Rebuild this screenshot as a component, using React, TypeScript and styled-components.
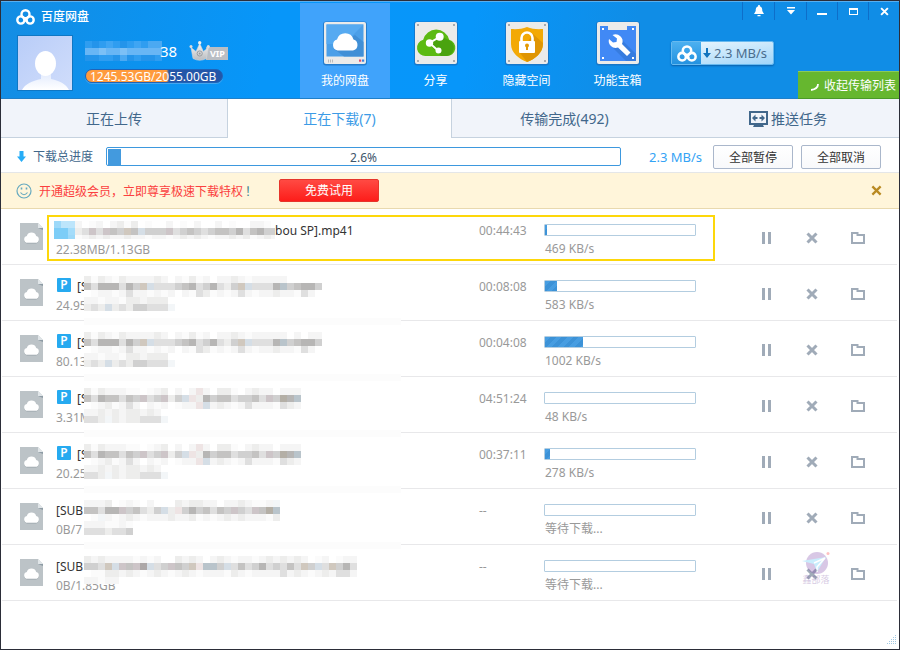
import React from 'react';
import styled, { createGlobalStyle, css } from 'styled-components';

const GlobalStyle = createGlobalStyle`
  * { box-sizing: border-box; }
  body {
    margin: 0;
    background: #fff;
    font-family: "Noto Sans", "Noto Sans CJK SC", sans-serif;
    font-size: 12px;
    line-height: 18px;
    color: #333;
  }
  button {
    font: inherit;
    color: inherit;
    background: none;
    border: 0;
    padding: 0;
    margin: 0;
    cursor: pointer;
  }
  svg { display: block; flex: none; }
`;

const Window = styled.div`
  display: flex;
  flex-direction: column;
  min-height: 100vh;
  border: 1px solid #2b2d38;
  background: #fff;
`;

/* ---------- header ---------- */

const Header = styled.header`
  display: flex;
  height: 98px;
  border-top: 1px solid #58aff0;
  border-bottom: 1px solid #2080c9;
  background: linear-gradient(100deg, #148de3 0%, #0c92ef 16%, #0796f9 30%, #0796fa 52%, #108de6 70%, #108de6 100%);
  color: #fff;
`;

const Account = styled.div`
  display: flex;
  flex-direction: column;
  width: 299px;
  padding: 6px 0 0 15px;
`;

const Brand = styled.h1`
  display: flex;
  align-items: center;
  gap: 6px;
  height: 18px;
  margin: 0;
  font-size: 12px;
  font-weight: 500;
`;

const Profile = styled.div`
  display: flex;
  gap: 12px;
  margin-top: 9px;
`;

const Avatar = styled.span`
  display: block;
  margin-left: 1px;
  border: 1px solid #0f77c4;
`;

const ProfileText = styled.div`
  display: flex;
  flex-direction: column;
  gap: 7px;
  padding-top: 5px;
`;

const NameLine = styled.div`
  display: flex;
  align-items: center;
  height: 22px;
  font-size: 15px;
  line-height: 20px;
`;

const NameTail = styled.span`
  margin-left: -2px;
`;

const VipMark = styled.span`
  margin-left: 12px;
`;

const Quota = styled.div`
  width: 138px;
  height: 14px;
  padding: 0 4px;
  border-radius: 7px;
  border: 1px solid #1f63b8;
  box-shadow: 0 1px 0 #45a6ee;
  background: linear-gradient(90deg, #ff9b3d 0 59%, #2356a8 61%);
  font-size: 12px;
  line-height: 14px;
  white-space: nowrap;
`;

const Nav = styled.nav`
  display: flex;
  padding-top: 1px;
`;

const NavItem = styled.a<{ $active?: boolean }>`
  display: flex;
  flex-direction: column;
  align-items: center;
  gap: 6px;
  width: 91px;
  padding-top: 17px;
  color: #fff;
  text-decoration: none;
  ${(p) => p.$active && css`width: 90px; background: #40a3fb;`}
`;

const HeaderTools = styled.div`
  display: flex;
  flex: 1;
  flex-direction: column;
  align-items: flex-start;
`;

const WindowControls = styled.div`
  display: flex;
  align-self: flex-end;
  height: 18px;
`;

const ControlButton = styled.button<{ $wide?: boolean }>`
  display: flex;
  align-items: center;
  justify-content: center;
  width: ${(p) => (p.$wide ? 32 : 31)}px;
  border-left: 1px solid #0e6ec9;
`;

const SpeedWidget = styled.div`
  display: flex;
  height: 24px;
  margin: 21px 0 0 8px;
  border: 1px solid #67b9ef;
  border-radius: 2px;
  box-shadow: 0 1px 2px #0a5faa;
  overflow: hidden;
`;

const SpeedLogo = styled.span`
  display: flex;
  align-items: center;
  justify-content: center;
  width: 29px;
  background: linear-gradient(#4cb0f0, #2492e0);
`;

const SpeedValue = styled.span`
  display: flex;
  align-items: center;
  gap: 3px;
  width: 72px;
  padding-left: 2px;
  background: linear-gradient(170deg, #e6f4fd, #9fd5fa);
  color: #4a6d8d;
  font-size: 13px;
`;

const CollapseButton = styled.button`
  display: flex;
  align-self: flex-end;
  align-items: center;
  justify-content: flex-end;
  gap: 5px;
  width: 101px;
  height: 28px;
  margin-top: auto;
  margin-bottom: -1px;
  padding: 2px 3px 0 0;
  border-top: 1px solid #8bc95a;
  border-bottom: 1px solid #4a9a28;
  background: #66b72f;
  color: #fff;
  white-space: nowrap;
`;

/* ---------- tabs ---------- */

const Tabs = styled.div`
  display: grid;
  grid-template-columns: 227fr 223fr 226fr 222fr;
  height: 39px;
`;

const Tab = styled.button<{ $active?: boolean; $edge?: 'left' | 'right' }>`
  display: flex;
  align-items: center;
  justify-content: center;
  gap: 3px;
  padding-top: 2px;
  background: #f1f4fa;
  border-bottom: 1px solid #c6d2df;
  color: #41678b;
  font-size: 14px;
  ${(p) => p.$edge === 'left' && css`border-left: 1px solid #c6d2df;`}
  ${(p) => p.$edge === 'right' && css`border-right: 1px solid #c6d2df;`}
  ${(p) => p.$active && css`background: #fff; border-color: #fff; color: #3c9be6;`}
`;

/* ---------- total progress ---------- */

const TotalBar = styled.section`
  display: flex;
  align-items: center;
  height: 35px;
  padding: 3px 18px 0 15px;
  border-bottom: 1px solid #e4e6e8;
`;

const TotalLabel = styled.span`
  margin: 0 13px 0 6px;
  color: #41678b;
`;

const TotalTrack = styled.div`
  display: grid;
  flex: 1;
  height: 19px;
  padding: 1px;
  border: 1px solid #3d98de;
  border-radius: 2px;
`;

const TotalFill = styled.div`
  grid-area: 1 / 1;
  background: #439ade;
`;

const TotalText = styled.span`
  grid-area: 1 / 1;
  justify-self: center;
  line-height: 17px;
  color: #41566b;
`;

const TotalSpeed = styled.span`
  width: 92px;
  padding-left: 28px;
  color: #34a3f5;
  font-size: 13px;
  white-space: nowrap;
`;

const PlainButton = styled.button`
  width: 80px;
  height: 24px;
  padding-top: 2px;
  border: 1px solid #aab7cb;
  border-radius: 2px;
  background: linear-gradient(#fff, #f8f9fb);
  color: #333;
  & + & { margin-left: 8px; }
`;

/* ---------- banner ---------- */

const Banner = styled.section`
  display: flex;
  align-items: center;
  height: 36px;
  padding: 0 17px 0 15px;
  border-bottom: 1px solid #e9d9ae;
  background: #fff5da;
  color: #fb4040;
`;

const BannerText = styled.span`
  display: flex;
  width: 233px;
  margin: 2px 0 0 7px;
  white-space: nowrap;
`;

const Exclaim = styled.span`
  margin-left: 2px;
  color: #3e7f8c;
`;

const TrialButton = styled.button`
  width: 100px;
  height: 23px;
  margin-left: 7px;
  padding-top: 1px;
  border: 1px solid #e6352b;
  border-radius: 2px;
  background: linear-gradient(#ff4a43, #fd1d1a);
  color: #fff;
`;

const BannerClose = styled.button`
  margin-left: auto;
`;

/* ---------- list ---------- */

const List = styled.ul`
  flex: 1;
  margin: 0;
  padding: 0 2px 0 1px;
  list-style: none;
`;

const Row = styled.li`
  position: relative;
  display: grid;
  grid-template-columns: 36px minmax(0, 1fr) 65px 152px 47px 138px 16px;
  height: 56px;
  padding-left: 18px;
  border-bottom: 1px solid #e8e8ea;
`;

const FileIconCell = styled.span`
  padding-top: 14px;
`;

const Lines = styled.div`
  position: relative;
  display: flex;
  flex-direction: column;
  gap: 1px;
  padding-top: 13px;
  color: #999;
  white-space: nowrap;
`;

const FileName = styled.div`
  display: flex;
  align-items: center;
  height: 18px;
  color: #333;
`;

const PBadge = styled.span`
  width: 14px;
  height: 14px;
  margin: 0 6px 4px 1px;
  border-radius: 1px;
  background: #26aaf0;
  color: #fff;
  font-size: 12px;
  font-weight: 600;
  line-height: 13px;
  text-align: center;
`;

const FirstMask = styled.span`
  width: 221px;
  margin-left: -2px;
  margin-top: -3px;
  overflow: hidden;
`;

const MaskOver = styled.span`
  position: absolute;
  z-index: 1;
  left: 28px;
  top: 11px;
`;

const TimeCell = styled.span`
  padding-top: 13px;
  color: #999;
`;

const ProgressCell = styled.div`
  display: flex;
  flex-direction: column;
  gap: 4px;
  padding-top: 15px;
  color: #999;
`;

const Track = styled.div`
  height: 12px;
  border: 1px solid #b3cde0;
  border-radius: 1px;
`;

const Fill = styled.div`
  height: 10px;
  background: repeating-linear-gradient(135deg, #479de1 0 4px, #3c92d7 4px 8px);
`;

const SpeedText = styled.span`
  padding-left: 1px;
`;

const Actions = styled.div`
  display: grid;
  grid-column: 6;
  grid-template-columns: repeat(3, 46px);
  height: 58px;
`;

const ActionButton = styled.button`
  position: relative;
  display: flex;
  align-items: center;
  justify-content: center;
`;

const Highlight = styled.span`
  position: absolute;
  z-index: 2;
  top: 6px;
  bottom: 3px;
  left: 45px;
  right: 182px;
  border: 2px solid #fdd70a;
  pointer-events: none;
`;

const Watermark = styled.span`
  position: absolute;
  top: 6px;
  left: 12px;
  display: flex;
  flex-direction: column;
  align-items: center;
  color: #7b54a6;
  font-size: 9px;
  line-height: 9px;
  white-space: nowrap;
  opacity: 0.3;
`;

const Footer = styled.footer`
  display: flex;
  justify-content: flex-end;
  padding: 0 3px 5px 0;
`;

/* ---------- pixel mask ---------- */

const TONES: Record<string, string> = {
  a: '#fbfbfb', b: '#f5f5f5', c: '#ededec', d: '#dfdfdf', e: '#d0d0d0', f: '#c4c3c2', g: '#b7b6b5',
  h: '#d5dee6', i: '#d0c8be', j: '#eee4e4', k: '#f3f6f8', l: '#b9c4cb', m: '#cdc5c8', n: '#b4afa6', o: '#ada8a8',
  A: '#a4dcfa', B: '#7dcdf7', C: '#9dd9f9', D: '#bde5fb',
  P: '#2f9df0', Q: '#3fa5f3', R: '#68b6f5', S: '#7cc0f6', T: '#2494ea', U: '#4ba9f2',
};

function Mask({ rows, base, trim = 0, band = false }: { rows: string[]; base?: string; trim?: number; band?: boolean }) {
  const cols = Math.max(...rows.map((r) => r.length));
  const width = band ? 317 : cols * 7;
  const height = band ? 49 : rows.length * 7 - trim;
  return (
    <svg width={width} height={height} shapeRendering="crispEdges" aria-hidden="true">
      {rows.map((r, y) => (
        <g key={y}>
          {base && <rect x={0} y={y * 7} width={r.length * 7} height={7} fill={base} />}
          {r.split('').map((ch, x) =>
            TONES[ch] ? <rect key={x} x={x * 7} y={y * 7} width={7} height={7} fill={TONES[ch]} /> : null,
          )}
        </g>
      ))}
      {band && <rect x={0} y={42} width={317} height={7} fill="#fcfcfc" />}
    </svg>
  );
}

const MASK_A = [
  'cacbacbbbbcb.bacab.bbcbabbbbb.....',
  'fdgggdgeihdddefgdegdceihdddglefgge',
  '.abbabdbbabab.badcababdbabbcbbadb.',
  'bbabbaccbccc',
  'cdchcdceedddk',
];
const MASK_A2 = [MASK_A[0].slice(0, 29) + '.b.bb', ...MASK_A.slice(1)];
const MASK_B = [
  'cacbbbaa.abc.b.bjb.cca.bcbb.bbb',
  'fdgffdfemdemcehjcgeffdeefdmengl',
  '.abcabdb.bab.abbjhbcbabdbbbadcb',
  'bbcbcbccbcb',
  'ddckcbccdddk',
];
const MASK_C = [
  'bbbc.aba.b...cbccbb.bbcbaabk',
  'ffdggmefdcehcjegefdfemedmfnl',
  '.akbabcbabbbcbbcababcbcbbbac',
  'bbbaaba',
  'dddcdde',
];
const MASK_D = [
  'cbcbbbbabab..cbcb.bcbabbabcbcbcb.ab.abb',
  'eedihmfmohdemfeijllehdfdegdedfdiehdiegd',
  '.aaccbcbabcbabcbabbbacbabbbbdbcbabcbddb',
  'bbabb',
];
const MASK_FIRST = [
  'CDDb.ab.bcac.a..b.a.b..b.a..bba.',
  'BBAcdmdmfeifheeemdefedeffegdfgee',
  'BBCabcbcbbcbbabbabcbcbabbcbcabcb',
];

/* ---------- icons ---------- */

function CloudLogo({ width = 19 }: { width?: number }) {
  return (
    <svg width={width} height={Math.round(width * 0.84)} viewBox="0 0 19 16" fill="none" stroke="#fff" strokeWidth="2.4">
      <circle cx="9.5" cy="5.3" r="4" />
      <circle cx="4.9" cy="11" r="3.6" />
      <circle cx="14.1" cy="11" r="3.6" />
      <path d="M7.6 9.2 11.2 12.7" />
    </svg>
  );
}

function AvatarArt() {
  return (
    <svg width="54" height="54" viewBox="0 0 54 54">
      <defs>
        <linearGradient id="av" x1="0" y1="0" x2="1" y2="1">
          <stop offset="0" stopColor="#b9cdf8" />
          <stop offset="1" stopColor="#d0ddfb" />
        </linearGradient>
        <linearGradient id="sh" x1="0" y1="0" x2="0" y2="1">
          <stop offset="0" stopColor="#e4ecfd" />
          <stop offset="1" stopColor="#fff" />
        </linearGradient>
      </defs>
      <rect width="54" height="54" fill="url(#av)" />
      <path d="M4 54c3-6 10-9 19-11v-5h10v5c9 2 15 5 18 11z" fill="url(#sh)" />
      <ellipse cx="27.5" cy="27.5" rx="10.5" ry="12.5" fill="#fff" />
    </svg>
  );
}

function VipBadge() {
  return (
    <svg width="40" height="22" viewBox="0 0 40 22" role="img" aria-label="VIP">
      <defs>
        <linearGradient id="cr" x1="0" y1="0" x2="0" y2="1">
          <stop offset="0" stopColor="#f4f4f4" />
          <stop offset="1" stopColor="#b9bcc0" />
        </linearGradient>
      </defs>
      <rect x="17" y="7" width="22" height="13" fill="#b9bec4" />
      <path d="M4 18.5 2 7.5l5 4 3.700-8 3.700 8 5-4-2 11q-6.700 3.500-13.400 0z" fill="url(#cr)" stroke="#d5d7da" strokeWidth=".6" />
      <circle cx="10.700" cy="2.800" r="1.700" fill="#eee" />
      <circle cx="2" cy="6.500" r="1.500" fill="#ddd" />
      <circle cx="19.300" cy="6.500" r="1.500" fill="#ddd" />
      <circle cx="10.700" cy="13.500" r="2.600" fill="none" stroke="#9a9da2" />
      <circle cx="10.700" cy="13.500" r=".9" fill="#999" />
      <text x="21" y="17" fontSize="9" fontWeight="700" fill="#fff" fontFamily="Noto Sans, sans-serif">VIP</text>
    </svg>
  );
}

function Plate({ children }: { children: React.ReactNode }) {
  return (
    <svg width="46" height="46" viewBox="0 0 46 46">
      <rect x="1" y="1.500" width="44" height="44" rx="3" fill="#1a6fbd" opacity=".75" />
      <rect x="2" y="2" width="42" height="42" rx="2" fill="#ebebea" />
      {children}
    </svg>
  );
}

function Screws() {
  return <path d="M4 4h2v2H4zM40 4h2v2h-2zM4 40h2v2H4zM40 40h2v2h-2z" fill="#a9abae" />;
}

function DiskIcon() {
  return (
    <Plate>
      <rect x="4.500" y="4.500" width="37" height="32" fill="#4b9fe8" />
      <path d="M33 15l8.500 7v14.500H22L12 29z" fill="#408fd6" />
      <path d="M4.500 4.500h37L22 24H4.500z" fill="#56aaf1" />
      <path d="M15.500 30.500a5.700 5.700 0 0 1-.5-11 8.600 8.600 0 0 1 16.500 0 5.700 5.700 0 0 1-.5 11z" fill="#fff" />
      <path d="M6.500 39.500v3M8.500 39.500v3M10.500 39.500v3" stroke="#bbb" />
      <rect x="37" y="39.500" width="2.200" height="2.200" fill="#e54b6b" />
      <rect x="40" y="39.500" width="2.200" height="2.200" fill="#3b85e0" />
    </Plate>
  );
}

function ShareIcon() {
  return (
    <Plate>
      <Screws />
      <path d="M13 36a8.300 8.300 0 0 1-2.800-16.300 13.400 13.400 0 0 1 26 0A8.300 8.300 0 0 1 33.500 36z" fill="#5cba12" />
      <path d="M27 15.500l9.500 5A8.300 8.300 0 0 1 33.500 36H28l-11-11z" fill="#4aa30f" />
      <path d="M26.500 17 16.500 23l8.500 7.500" fill="none" stroke="#fff" strokeWidth="2" />
      <circle cx="26.700" cy="16.700" r="4" fill="#fff" />
      <circle cx="16.500" cy="23" r="3.700" fill="#fff" />
      <circle cx="25.500" cy="30.500" r="3" fill="#fff" />
    </Plate>
  );
}

function SafeIcon() {
  return (
    <Plate>
      <Screws />
      <path d="M23 7c-5 2-10 2.400-16 2v15c0 9 8 15 16 18 8-3 16-9 16-18V9c-6 .4-11 0-16-2z" fill="#f3a905" />
      <path d="M29 14l10 9c0 10-8 16-16 19l-7-9z" fill="#df9503" />
      <path d="M17.500 22v-4a5.500 5.500 0 0 1 11 0v4" fill="none" stroke="#fff" strokeWidth="2.600" />
      <rect x="15" y="21" width="16" height="12" rx="1" fill="#fff" />
      <circle cx="23" cy="25.500" r="2" fill="#e39a05" />
      <path d="M22 26h2v4h-2z" fill="#e39a05" />
    </Plate>
  );
}

function ToolboxIcon() {
  return (
    <Plate>
      <path d="M5 6h8v4h19V6h9v35H5z" fill="#4189f5" />
      <path d="M27 20l14 14v7H31L18 28z" fill="#377cdf" />
      <path d="M7 8h2v2H7zM37 8h2v2h-2zM7 37h2v2H7zM37 37h2v2h-2z" fill="#fff" />
      <path d="M17.500 15a7 7 0 0 1 9.500 9l8.500 8.500-3.500 3.500-9-8.500a7 7 0 0 1-9-8.500l4 3.500 3.500-.5.500-3.500z" fill="#fff" />
    </Plate>
  );
}

function CrossIcon({ size, color, weight }: { size: number; color: string; weight: number }) {
  return (
    <svg width={size} height={size} viewBox="0 0 12 12" stroke={color} strokeWidth={weight}>
      <path d="M1.500 1.500l9 9M10.500 1.500l-9 9" />
    </svg>
  );
}

function FileIcon() {
  return (
    <svg width="23" height="27" viewBox="0 0 23 27">
      <path d="M0 0h18l5 5v22H0z" fill="#bcc3c7" />
      <path d="M18 0v5h5z" fill="#e0e5e8" />
      <path d="M18 5h5v2z" fill="#8d9ba4" />
      <path d="M7.500 20.500a3.500 3.500 0 0 1-.7-6.900 5 5 0 0 1 9.400 0 3.500 3.500 0 0 1-.7 6.900z" fill="#98a3a9" />
      <path d="M7.500 19.800a3.500 3.500 0 0 1-.7-6.900 5 5 0 0 1 9.400 0 3.500 3.500 0 0 1-.7 6.900z" fill="#fff" />
    </svg>
  );
}

function PauseIcon() {
  return (
    <svg width="9" height="12" viewBox="0 0 9 12" fill="#a0abb8">
      <path d="M0 0h3v12H0zM6 0h3v12H6z" />
    </svg>
  );
}

function FolderIcon() {
  return (
    <svg width="14" height="12" viewBox="0 0 14 12" fill="none" stroke="#a0abb8" strokeWidth="2">
      <path d="M1 1h5.500v2H13v8H1z" />
    </svg>
  );
}

function SmileIcon() {
  return (
    <svg width="16" height="16" viewBox="0 0 16 16" fill="none" stroke="#66a9bf" strokeWidth="1.200">
      <circle cx="8" cy="8" r="7" />
      <path d="M4.500 9.500q3.500 4.500 7 0" />
      <path d="M5.500 4.500v2M10.500 4.500v2" strokeWidth="1.600" />
    </svg>
  );
}

/* ---------- data ---------- */

interface Task {
  name: string;
  size: string;
  time: string;
  speed: string;
  percent: number;
  badge?: boolean;
  mask?: string[];
}

const TASKS: Task[] = [
  { name: 'bou SP].mp41', size: '22.38MB/1.13GB', time: '00:44:43', speed: '469 KB/s', percent: 1.5 },
  { name: '[S', size: '24.95', time: '00:08:08', speed: '583 KB/s', percent: 8, badge: true, mask: MASK_A },
  { name: '[S', size: '80.13', time: '00:04:08', speed: '1002 KB/s', percent: 25, badge: true, mask: MASK_A2 },
  { name: '[S', size: '3.31M', time: '04:51:24', speed: '48 KB/s', percent: 0, badge: true, mask: MASK_B },
  { name: '[S', size: '20.25', time: '00:37:11', speed: '278 KB/s', percent: 3, badge: true, mask: MASK_B },
  { name: '[SUB', size: '0B/7', time: '--', speed: '等待下载...', percent: 0, mask: MASK_C },
  { name: '[SUB', size: '0B/1.85GB', time: '--', speed: '等待下载...', percent: 0, mask: MASK_D },
];

function TaskRow({ task, first, last }: { task: Task; first: boolean; last: boolean }) {
  return (
    <Row>
      <FileIconCell><FileIcon /></FileIconCell>
      <Lines>
        <FileName>
          {task.badge && <PBadge>P</PBadge>}
          {first && <FirstMask><Mask rows={MASK_FIRST} trim={3} /></FirstMask>}
          {task.name}
        </FileName>
        <span>{task.size}</span>
        {task.mask && <MaskOver><Mask rows={task.mask} base="#fff" band={!last} /></MaskOver>}
      </Lines>
      <TimeCell>{task.time}</TimeCell>
      <ProgressCell>
        <Track role="progressbar" aria-valuenow={task.percent} aria-label="下载进度">
          <Fill style={{ width: `${task.percent}%` }} />
        </Track>
        <SpeedText>{task.speed}</SpeedText>
      </ProgressCell>
      <Actions>
        <ActionButton aria-label="暂停"><PauseIcon /></ActionButton>
        <ActionButton aria-label="取消">
          <CrossIcon size={12} color="#a0abb8" weight={3} />
          {last && (
            <Watermark>
              <svg width="30" height="24" viewBox="0 0 30 24">
                <circle cx="16" cy="12" r="11" fill="#8048ab" />
                <path d="M1 10l24-4-9 15-3-8z" fill="#4fc4f7" />
                <path d="M13 12l11-5-8 9v5" fill="none" stroke="#fff" strokeWidth="1.500" />
                <circle cx="27" cy="2.500" r="1.500" fill="#f33" />
              </svg>
              鑫部落
            </Watermark>
          )}
        </ActionButton>
        <ActionButton aria-label="打开文件夹"><FolderIcon /></ActionButton>
      </Actions>
      {first && <Highlight />}
    </Row>
  );
}

export default function App() {
  return (
    <>
      <GlobalStyle />
      <Window>
        <Header>
          <Account>
            <Brand><CloudLogo />百度网盘</Brand>
            <Profile>
              <Avatar><AvatarArt /></Avatar>
              <ProfileText>
                <NameLine>
                  <Mask rows={['PTPQPTPQPUU', 'RRSRRSRRRRR', 'TTPPTUTPTTP']} trim={1} />
                  <NameTail>38</NameTail>
                  <VipMark><VipBadge /></VipMark>
                </NameLine>
                <Quota>1245.53GB/2055.00GB</Quota>
              </ProfileText>
            </Profile>
          </Account>
          <Nav>
            <NavItem href="#disk" $active><DiskIcon />我的网盘</NavItem>
            <NavItem href="#share"><ShareIcon />分享</NavItem>
            <NavItem href="#safe"><SafeIcon />隐藏空间</NavItem>
            <NavItem href="#tools"><ToolboxIcon />功能宝箱</NavItem>
          </Nav>
          <HeaderTools>
            <WindowControls>
              <ControlButton $wide aria-label="通知">
                <svg width="10" height="12" viewBox="0 0 10 12" fill="#fff">
                  <path d="M4.200 0h1.600v1.200C8 1.800 8.300 3.500 8.300 6L10 9H0l1.700-3c0-2.500.3-4.200 2.500-4.800zM3.500 10h3v1.300h-3z" />
                </svg>
              </ControlButton>
              <ControlButton $wide aria-label="菜单">
                <svg width="10" height="8" viewBox="0 0 10 8" fill="#fff"><path d="M1 0h8v1.500H1zM1 3h8L5 7.500z" /></svg>
              </ControlButton>
              <ControlButton aria-label="最小化">
                <svg width="10" height="8" viewBox="0 0 10 8"><path d="M0 6h10v2H0z" fill="#fff" /></svg>
              </ControlButton>
              <ControlButton aria-label="最大化">
                <svg width="9" height="7" viewBox="0 0 9 7"><path d="M0 0h9v7H0zM1 2v4h7V2z" fill="#fff" fillRule="evenodd" /></svg>
              </ControlButton>
              <ControlButton aria-label="关闭"><CrossIcon size={9} color="#fff" weight={2.6} /></ControlButton>
            </WindowControls>
            <SpeedWidget>
              <SpeedLogo><CloudLogo width={20} /></SpeedLogo>
              <SpeedValue>
                <svg width="8" height="10" viewBox="0 0 8 10" fill="#1173bd"><path d="M3 0h2v5h3L4 10 0 5h3z" /></svg>
                2.3 MB/s
              </SpeedValue>
            </SpeedWidget>
            <CollapseButton>
              <svg width="8" height="12" viewBox="0 0 8 12"><path d="M7 4q0 5-7 6" fill="none" stroke="#fff" strokeWidth="1.800" /></svg>
              收起传输列表
            </CollapseButton>
          </HeaderTools>
        </Header>

        <Tabs role="tablist">
          <Tab role="tab" $edge="right">正在上传</Tab>
          <Tab role="tab" $active aria-selected="true">正在下载(7)</Tab>
          <Tab role="tab" $edge="left">传输完成(492)</Tab>
          <Tab role="tab">
            <svg width="19" height="16" viewBox="0 0 19 16" fill="#41678b">
              <path d="M0 0h19v14H0zM2 2v10h15V2z" fillRule="evenodd" />
              <path d="M5 14h9l1 2H4zM3 7l3.500-3.500V6h2v2h-2v2.500zM16 7l-3.500-3.500V6h-2v2h2v2.500z" />
            </svg>
            推送任务
          </Tab>
        </Tabs>

        <TotalBar>
          <svg width="11" height="11" viewBox="0 0 11 11" fill="#27adf7"><path d="M3.500 0h4v5.500H10L5.500 11 1 5.500h2.500z" /></svg>
          <TotalLabel>下载总进度</TotalLabel>
          <TotalTrack role="progressbar" aria-valuenow={2.6} aria-label="下载总进度">
            <TotalFill style={{ width: '2.6%' }} />
            <TotalText>2.6%</TotalText>
          </TotalTrack>
          <TotalSpeed>2.3 MB/s</TotalSpeed>
          <PlainButton>全部暂停</PlainButton>
          <PlainButton>全部取消</PlainButton>
        </TotalBar>

        <Banner>
          <SmileIcon />
          <BannerText>开通超级会员，立即尊享极速下载特权<Exclaim>！</Exclaim></BannerText>
          <TrialButton>免费试用</TrialButton>
          <BannerClose aria-label="关闭提示"><CrossIcon size={11} color="#b98a22" weight={2.5} /></BannerClose>
        </Banner>

        <List>
          {TASKS.map((task, i) => (
            <TaskRow key={i} task={task} first={i === 0} last={i === TASKS.length - 1} />
          ))}
        </List>

        <Footer>
          <svg width="9" height="9" viewBox="0 0 9 9" fill="#a3c9e2" shapeRendering="crispEdges" aria-hidden="true">
            <path d="M8 0h1v1H8zM6 2h1v1H6zM8 2h1v1H8zM4 4h1v1H4zM6 4h1v1H6zM8 4h1v1H8zM2 6h1v1H2zM4 6h1v1H4zM6 6h1v1H6zM8 6h1v1H8zM0 8h1v1H0zM2 8h1v1H2zM4 8h1v1H4zM6 8h1v1H6zM8 8h1v1H8z" />
          </svg>
        </Footer>
      </Window>
    </>
  );
}
